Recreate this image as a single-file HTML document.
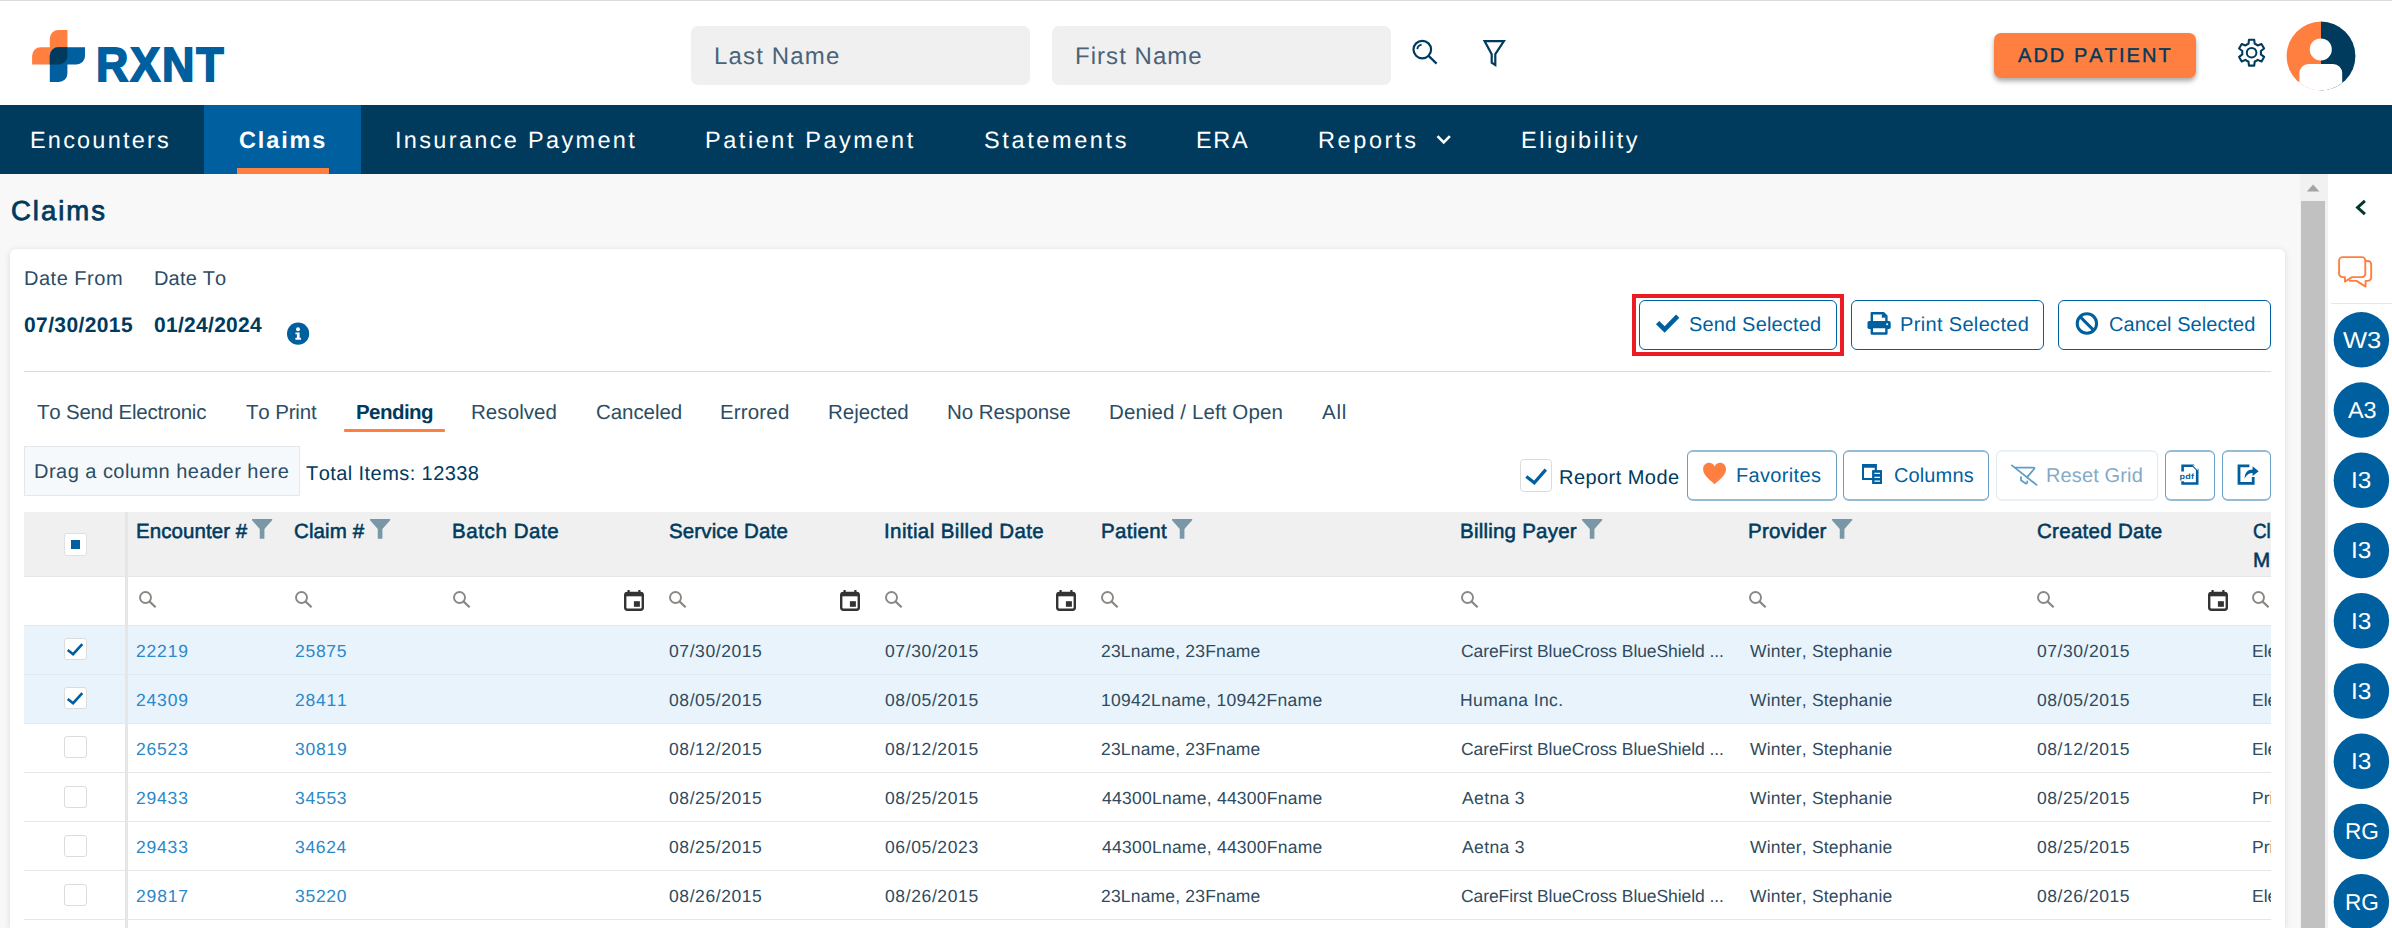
<!DOCTYPE html>
<html lang="en"><head><meta charset="utf-8"><title>Claims - RXNT</title>
<style>
html,body{margin:0;padding:0}
html{width:2392px;height:928px;overflow:hidden}
body{width:2392px;height:928px;overflow:hidden;position:relative;background:#f8f8f8;font-family:"Liberation Sans",Arial,sans-serif;font-kerning:none;text-rendering:geometricPrecision;-webkit-font-smoothing:antialiased}
body *{position:absolute;box-sizing:border-box;white-space:nowrap;margin:0;padding:0}
header,nav,main,aside,div[role]{left:0;top:0;display:block}
b{font-weight:bold}
h1{font-weight:normal}
a{text-decoration:none}
svg{overflow:visible;display:block}
svg *{position:static}
.btn{border:1.5px solid #005f9e;border-radius:6px;background:#fff}
</style></head><body>
<header>
<div style="left:0px;top:0px;width:2392px;height:105px;background:#fff;"></div>
<div style="left:0px;top:0px;width:2392px;height:1px;background:#dcdcdc;"></div>
<svg style="left:30px;top:28px;" width="60" height="56" viewBox="30 28 60 56"><path d="M58.3,30.1H67.4V55.9A8.5,8.5 0 0 1 58.9,64.4H32.1V55.7A8.5,8.5 0 0 1 40.6,47.2H49.8V38.6A8.5,8.5 0 0 1 58.3,30.1Z" fill="#ff7f41"/><path d="M58.3,47.2H85V55.9A8.5,8.5 0 0 1 76.5,64.4H67.4V73.5A8.5,8.5 0 0 1 58.9,82H49.8V55.7A8.5,8.5 0 0 1 58.3,47.2Z" fill="#005f9e"/><path d="M58.3,47.2H67.4V55.9A8.5,8.5 0 0 1 58.9,64.4H49.8V55.7A8.5,8.5 0 0 1 58.3,47.2Z" fill="#003a5d"/></svg>
<span style="left:96px;top:42.1px;font-size:48px;line-height:48px;color:#005f9e;font-weight:bold;transform:scaleX(0.9335);transform-origin:0 0;letter-spacing:2px;-webkit-text-stroke:1.8px #005f9e;">RXNT</span>
<div style="left:691px;top:25.6px;width:339px;height:59.2px;background:#f0f0f0;border-radius:7px;"></div>
<span style="left:714px;top:45px;font-size:24px;line-height:24px;color:#4a6378;letter-spacing:1.16px;">Last Name</span>
<div style="left:1051.6px;top:25.6px;width:339px;height:59.2px;background:#f0f0f0;border-radius:7px;"></div>
<span style="left:1075px;top:45px;font-size:24px;line-height:24px;color:#4a6378;letter-spacing:1.04px;">First Name</span>
<svg style="left:1408px;top:36px;" width="34" height="32" viewBox="1408 36 34 32"><circle cx="1422.3" cy="49.6" r="8.8" fill="none" stroke="#003a5d" stroke-width="2.2"/><path d="M1428.6,55.9L1436.6,63.6" stroke="#003a5d" stroke-width="2.2" fill="none" stroke-linecap="butt"/><path d="M1417.3,49.2A5.2,5.2 0 0 1 1421.6,44.6" stroke="#003a5d" stroke-width="1.8" fill="none"/></svg>
<svg style="left:1480px;top:36px;" width="30" height="34" viewBox="1480 36 30 34"><path d="M1484.6,41.1H1503.9L1495.3,54.2V65L1491.7,62.6V54.2Z" fill="none" stroke="#003a5d" stroke-width="2.2" stroke-linejoin="miter"/></svg>
<div style="left:1994px;top:33px;width:202px;height:45.3px;background:#ff7f41;border-radius:7px;box-shadow:0 3px 5px rgba(0,0,0,.35);"></div>
<span style="left:2018px;top:46.2px;font-size:20px;line-height:20px;color:#003a5d;letter-spacing:2.04px;-webkit-text-stroke:0.4px #003a5d;">ADD PATIENT</span>
<svg style="left:2236px;top:37px;" width="32" height="32" viewBox="2236 37 32 32"><path d="M2248.47,43.84L2248.98,39.76L2254.22,39.76L2254.73,43.84A9.4,9.4 0 0 1 2257.71,45.55L2261.49,43.96L2264.11,48.50L2260.84,50.98A9.4,9.4 0 0 1 2260.84,54.42L2264.11,56.90L2261.49,61.44L2257.71,59.85A9.4,9.4 0 0 1 2254.73,61.56L2254.22,65.64L2248.98,65.64L2248.47,61.56A9.4,9.4 0 0 1 2245.49,59.85L2241.71,61.44L2239.09,56.90L2242.36,54.42A9.4,9.4 0 0 1 2242.36,50.98L2239.09,48.50L2241.71,43.96L2245.49,45.55A9.4,9.4 0 0 1 2248.47,43.84Z" fill="none" stroke="#003a5d" stroke-width="2.1" stroke-linejoin="round"/><circle cx="2251.6" cy="52.7" r="4.8" fill="none" stroke="#003a5d" stroke-width="2"/></svg>
<svg style="left:2286px;top:21px;" width="70" height="70" viewBox="2286 21 70 70"><path d="M2321,21.6A34.4,34.4 0 0 0 2321,90.4Z" fill="#ff7f41"/><path d="M2321,21.6A34.4,34.4 0 0 1 2321,90.4Z" fill="#003a5d"/><circle cx="2320.8" cy="49.4" r="11" fill="#fff"/><path d="M2299.4,82.8V73.1A9,9 0 0 1 2308.4,64.1H2333.2A9,9 0 0 1 2342.2,73.1V83.1A34.4,34.4 0 0 1 2299.4,82.8Z" fill="#fff"/></svg>
</header>
<nav>
<div style="left:0px;top:105px;width:2392px;height:69px;background:#003a5d;"></div>
<div style="left:204px;top:105px;width:157px;height:69px;background:#005f9e;"></div>
<div style="left:237px;top:167.8px;width:92px;height:6.2px;background:#ff7f41;"></div>
<a style="left:30px;top:127.6px;font-size:23.5px;line-height:24px;color:#fff;letter-spacing:2.2px;">Encounters</a>
<a style="left:239px;top:127.6px;font-size:23.5px;line-height:24px;color:#fff;font-weight:bold;letter-spacing:1.86px;">Claims</a>
<a style="left:395px;top:127.6px;font-size:23.5px;line-height:24px;color:#fff;letter-spacing:2.33px;">Insurance Payment</a>
<a style="left:705px;top:127.6px;font-size:23.5px;line-height:24px;color:#fff;letter-spacing:2.56px;">Patient Payment</a>
<a style="left:984px;top:127.6px;font-size:23.5px;line-height:24px;color:#fff;letter-spacing:2.62px;">Statements</a>
<a style="left:1196px;top:127.6px;font-size:23.5px;line-height:24px;color:#fff;letter-spacing:1.66px;">ERA</a>
<a style="left:1318px;top:127.6px;font-size:23.5px;line-height:24px;color:#fff;letter-spacing:2.61px;">Reports</a>
<a style="left:1521px;top:127.6px;font-size:23.5px;line-height:24px;color:#fff;letter-spacing:2.52px;">Eligibility</a>
<svg style="left:1434px;top:130px;" width="20" height="20" viewBox="1434 130 20 20"><path d="M1437.5,136.2L1443.7,142.4L1449.9,136.2" fill="none" stroke="#fff" stroke-width="2.6"/></svg>
</nav>
<main>
<h1 style="left:11px;top:197.1px;font-size:27.5px;line-height:28px;color:#003a5d;letter-spacing:1.99px;-webkit-text-stroke:0.8px #003a5d;">Claims</h1>
<section style="left:10px;top:249px;width:2275px;height:679px;background:#fff;border-radius:6px 6px 0 0;box-shadow:0 1px 6px rgba(0,0,0,.13);"></section>
<span style="left:24px;top:268.8px;font-size:20px;line-height:20px;color:#2c4d63;letter-spacing:0.51px;">Date From</span>
<span style="left:154px;top:268.8px;font-size:20px;line-height:20px;color:#2c4d63;letter-spacing:0.17px;">Date To</span>
<span style="left:24px;top:314.7px;font-size:21px;line-height:21px;color:#003a5d;font-weight:bold;letter-spacing:0.39px;">07/30/2015</span>
<span style="left:154px;top:314.7px;font-size:21px;line-height:21px;color:#003a5d;font-weight:bold;letter-spacing:0.29px;">01/24/2024</span>
<svg style="left:286px;top:322px;" width="24" height="24" viewBox="286 322 24 24"><circle cx="298.1" cy="333.7" r="11.1" fill="#005f9e"/><circle cx="298" cy="329.2" r="2" fill="#fff"/><path d="M295.4,332.5H299.6V337.8H301V339.8H295.4V337.8H296.9V334.2H295.4Z" fill="#fff"/></svg>
<div style="left:1632.2px;top:293.7px;width:211.5px;height:61.9px;border:4px solid #ed1c24;"></div>
<div class="btn" style="left:1639.2px;top:300px;width:197.7px;height:49.9px;"></div>
<svg style="left:1655px;top:314px;" width="25" height="20" viewBox="1655 314 25 20"><path d="M1657.6,322.6L1664.6,329.5L1677.7,316.1" fill="none" stroke="#005f9e" stroke-width="4.6"/></svg>
<span style="left:1689px;top:315px;font-size:20px;line-height:20px;color:#005f9e;letter-spacing:0.17px;">Send Selected</span>
<div class="btn" style="left:1851px;top:300px;width:192.8px;height:49.9px;"></div>
<span style="left:1900px;top:315.2px;font-size:20px;line-height:20px;color:#005f9e;letter-spacing:0.34px;">Print Selected</span>
<div class="btn" style="left:2057.9px;top:300px;width:212.9px;height:49.9px;"></div>
<span style="left:2109px;top:315.2px;font-size:20px;line-height:20px;color:#005f9e;letter-spacing:0.05px;">Cancel Selected</span>
<svg style="left:1866px;top:311px;" width="26" height="25" viewBox="1866 311 26 25"><path d="M1871.8,322V313.2H1883.4L1886.4,316.2V322" fill="#fff" stroke="#005f9e" stroke-width="2.4" stroke-linejoin="round"/><path d="M1881.8,314.3H1885.2V317.7H1881.8Z" fill="#005f9e"/><rect x="1867.5" y="321.1" width="23.2" height="7.8" rx="1.6" fill="#005f9e"/><rect x="1871.8" y="327" width="14.6" height="6.5" fill="#fff" stroke="#005f9e" stroke-width="2.4" stroke-linejoin="round"/><circle cx="1887.1" cy="324.3" r="1" fill="#fff"/></svg>
<svg style="left:2074px;top:311px;" width="26" height="25" viewBox="2074 311 26 25"><circle cx="2086.9" cy="323.5" r="9.7" fill="none" stroke="#005f9e" stroke-width="3"/><path d="M2080,316.6L2093.8,330.4" stroke="#005f9e" stroke-width="3"/></svg>
<div style="left:24.4px;top:371px;width:2246.4px;height:1.2px;background:#dcdcdc;"></div>
<a style="left:37px;top:403px;font-size:20.5px;line-height:20px;color:#2c4d63;letter-spacing:-0.22px;">To Send Electronic</a>
<a style="left:246px;top:403px;font-size:20.5px;line-height:20px;color:#2c4d63;letter-spacing:-0.15px;">To Print</a>
<a style="left:356px;top:403px;font-size:20.5px;line-height:20px;color:#003a5d;font-weight:bold;letter-spacing:-0.56px;">Pending</a>
<a style="left:471px;top:403px;font-size:20.5px;line-height:20px;color:#2c4d63;letter-spacing:0.07px;">Resolved</a>
<a style="left:596px;top:403px;font-size:20.5px;line-height:20px;color:#2c4d63;letter-spacing:-0.06px;">Canceled</a>
<a style="left:720px;top:403px;font-size:20.5px;line-height:20px;color:#2c4d63;letter-spacing:0.16px;">Errored</a>
<a style="left:828px;top:403px;font-size:20.5px;line-height:20px;color:#2c4d63;letter-spacing:-0.03px;">Rejected</a>
<a style="left:947px;top:403px;font-size:20.5px;line-height:20px;color:#2c4d63;letter-spacing:-0.05px;">No Response</a>
<a style="left:1109px;top:403px;font-size:20.5px;line-height:20px;color:#2c4d63;letter-spacing:0.1px;">Denied / Left Open</a>
<a style="left:1322px;top:403px;font-size:20.5px;line-height:20px;color:#2c4d63;letter-spacing:0.74px;">All</a>
<div style="left:343.9px;top:429.4px;width:100.9px;height:2.3px;background:#ff7f41;border-radius:1px;"></div>
<div style="left:24.3px;top:446.1px;width:275.4px;height:49.5px;background:#f5f9fc;border:1px solid #e3e8ec;"></div>
<span style="left:34px;top:462px;font-size:20px;line-height:20px;color:#2c4d63;letter-spacing:0.47px;">Drag a column header here</span>
<span style="left:306px;top:464px;font-size:20px;line-height:20px;color:#003a5d;letter-spacing:0.43px;">Total Items: 12338</span>
<div style="left:1519.5px;top:459px;width:32.5px;height:33px;background:#fff;border:1px solid #dcdcdc;border-radius:4px;"></div>
<svg style="left:1522px;top:462px;" width="28" height="28" viewBox="1522 462 28 28"><path d="M1526.3,476.6L1534.3,482.8L1545.8,469.6" fill="none" stroke="#005f9e" stroke-width="3.2"/></svg>
<span style="left:1559px;top:468px;font-size:20px;line-height:20px;color:#003a5d;letter-spacing:0.45px;">Report Mode</span>
<div class="btn" style="left:1687px;top:450px;width:149.6px;height:50.6px;border-style:solid;border-width:2px 1px;border-color:#94bcd5 #6a9fc4;"></div>
<svg style="left:1702px;top:462px;" width="26" height="23" viewBox="1702 462 26 23"><path d="M1714.6,484.3C1708,478.5 1703.1,474.6 1703.1,469.1C1703.1,465.4 1705.8,462.7 1709.2,462.7C1711.4,462.7 1713.4,464 1714.6,466.4C1715.8,464 1717.8,462.7 1720,462.7C1723.4,462.7 1726,465.4 1726,469.1C1726,474.6 1721.2,478.5 1714.6,484.3Z" fill="#ff7f41"/></svg>
<span style="left:1736px;top:466px;font-size:20px;line-height:20px;color:#005f9e;letter-spacing:0.33px;">Favorites</span>
<div class="btn" style="left:1843.1px;top:450px;width:145.9px;height:50.6px;border-style:solid;border-width:2px 1px;border-color:#94bcd5 #6a9fc4;"></div>
<svg style="left:1861px;top:463px;" width="22" height="22" viewBox="1861 463 22 22"><path d="M1862,464.05H1876.9V479.9H1862ZM1864,467.7V478.1H1874.7V467.7Z" fill="#005f9e" fill-rule="evenodd"/><rect x="1872.1" y="470.1" width="9.9" height="13.9" fill="#005f9e"/><path d="M1874.4,473.4H1880M1874.4,477.3H1880M1874.4,481.2H1880" stroke="#fff" stroke-width="1.3"/></svg>
<span style="left:1894px;top:466px;font-size:20px;line-height:20px;color:#005f9e;letter-spacing:0.12px;">Columns</span>
<div class="btn" style="left:1996.3px;top:450px;width:161.7px;height:50.6px;border-style:solid;border-width:2px 1px;border-color:#eaf1f6 #dde8f0;"></div>
<svg style="left:2010px;top:463px;" width="30" height="24" viewBox="2010 463 30 24"><g stroke="#5f9dc4" stroke-width="1.8" fill="none" stroke-linecap="round" stroke-linejoin="round"><path d="M2011.9,465.4L2036.6,484.9"/><path d="M2015.4,467.6H2033.3Q2035.1,467.6 2034.1,469L2026.9,477.3"/><path d="M2021,477.2V480.3L2025.7,483.6Q2027.5,483.5 2027.2,481.5"/></g></svg>
<span style="left:2046px;top:466px;font-size:20px;line-height:20px;color:#84aac8;letter-spacing:0.13px;">Reset Grid</span>
<div class="btn" style="left:2165px;top:450px;width:49.6px;height:50.6px;border-style:solid;border-width:2px 1px;border-color:#94bcd5 #6a9fc4;"></div>
<div class="btn" style="left:2221.9px;top:450px;width:48.9px;height:50.6px;border-style:solid;border-width:2px 1px;border-color:#94bcd5 #6a9fc4;"></div>
<svg style="left:2179px;top:463px;" width="22" height="24" viewBox="2179 463 22 24"><path d="M2182.6,471.5V465.7H2193.3L2197.2,469.6V483.5H2182.6V481.2" fill="none" stroke="#005f9e" stroke-width="2.6"/><path d="M2192.6,465.2L2197.8,470.4V465.2Z" fill="#fff"/></svg>
<span style="left:2179.6px;top:471.2px;font-size:9px;line-height:11px;font-weight:bold;color:#005f9e;letter-spacing:.2px;transform:scaleY(.86)">pdf</span>
<svg style="left:2236px;top:463px;" width="24" height="24" viewBox="2236 463 24 24"><path d="M2253.2,477V483.4H2239V465.8H2249.4" fill="none" stroke="#005f9e" stroke-width="2.8"/><path d="M2244.6,478.4C2244.8,472.6 2247.8,469.5 2252.6,469.5V466.3L2258.7,471.2L2252.6,476.1V473C2249.3,473 2246.8,474.6 2244.6,478.4Z" fill="#005f9e"/></svg>
<div role="table">
<div role="rowgroup">
<div style="left:24.4px;top:512px;width:2246.4px;height:65px;background:#f0f0f0;"></div>
<div style="left:24.4px;top:576px;width:2246.4px;height:1px;background:#e6e6e6;"></div>
<b style="left:136px;top:521.8px;font-size:20.5px;line-height:20px;color:#003a5d;letter-spacing:0.07px;-webkit-text-stroke:0.55px #003a5d;font-weight:normal;">Encounter #</b>
<svg style="left:252.3px;top:519.3px;" width="20.2" height="19.8" viewBox="252.3 519.3 20.2 19.8"><path d="M252.3,519.3H272.5V520.5L264.723,529.1999999999999V539.0999999999999H260.077V529.1999999999999L252.3,520.5Z" fill="#7a97a8"/></svg>
<b style="left:294px;top:521.8px;font-size:20.5px;line-height:20px;color:#003a5d;letter-spacing:0.12px;-webkit-text-stroke:0.55px #003a5d;font-weight:normal;">Claim #</b>
<svg style="left:369.8px;top:519.3px;" width="20.2" height="19.8" viewBox="369.8 519.3 20.2 19.8"><path d="M369.8,519.3H390.0V520.5L382.223,529.1999999999999V539.0999999999999H377.577V529.1999999999999L369.8,520.5Z" fill="#7a97a8"/></svg>
<b style="left:452px;top:521.8px;font-size:20.5px;line-height:20px;color:#003a5d;letter-spacing:0.59px;-webkit-text-stroke:0.55px #003a5d;font-weight:normal;">Batch Date</b>
<b style="left:669px;top:521.8px;font-size:20.5px;line-height:20px;color:#003a5d;letter-spacing:0.13px;-webkit-text-stroke:0.55px #003a5d;font-weight:normal;">Service Date</b>
<b style="left:884px;top:521.8px;font-size:20.5px;line-height:20px;color:#003a5d;letter-spacing:0.39px;-webkit-text-stroke:0.55px #003a5d;font-weight:normal;">Initial Billed Date</b>
<b style="left:1101px;top:521.8px;font-size:20.5px;line-height:20px;color:#003a5d;letter-spacing:0.31px;-webkit-text-stroke:0.55px #003a5d;font-weight:normal;">Patient</b>
<svg style="left:1172.2px;top:519.3px;" width="20.2" height="19.8" viewBox="1172.2 519.3 20.2 19.8"><path d="M1172.2,519.3H1192.4V520.5L1184.623,529.1999999999999V539.0999999999999H1179.977V529.1999999999999L1172.2,520.5Z" fill="#7a97a8"/></svg>
<b style="left:1460px;top:521.8px;font-size:20.5px;line-height:20px;color:#003a5d;letter-spacing:0.22px;-webkit-text-stroke:0.55px #003a5d;font-weight:normal;">Billing Payer</b>
<svg style="left:1581.5px;top:519.3px;" width="20.2" height="19.8" viewBox="1581.5 519.3 20.2 19.8"><path d="M1581.5,519.3H1601.7V520.5L1593.923,529.1999999999999V539.0999999999999H1589.277V529.1999999999999L1581.5,520.5Z" fill="#7a97a8"/></svg>
<b style="left:1748px;top:521.8px;font-size:20.5px;line-height:20px;color:#003a5d;letter-spacing:0.3px;-webkit-text-stroke:0.55px #003a5d;font-weight:normal;">Provider</b>
<svg style="left:1831.8px;top:519.3px;" width="20.2" height="19.8" viewBox="1831.8 519.3 20.2 19.8"><path d="M1831.8,519.3H1852.0V520.5L1844.223,529.1999999999999V539.0999999999999H1839.577V529.1999999999999L1831.8,520.5Z" fill="#7a97a8"/></svg>
<b style="left:2037px;top:521.8px;font-size:20.5px;line-height:20px;color:#003a5d;letter-spacing:0.29px;-webkit-text-stroke:0.55px #003a5d;font-weight:normal;">Created Date</b>
<div style="left:2242px;top:512px;width:28.8px;height:64px;overflow:hidden">
<b style="left:11px;top:9.8px;font-size:20.5px;line-height:20px;color:#003a5d;transform:scaleX(0.9191);transform-origin:0 0;-webkit-text-stroke:0.55px #003a5d;font-weight:normal;">Cl</b>
<b style="left:11px;top:39px;font-size:20.5px;line-height:20px;color:#003a5d;transform:scaleX(1.0065);transform-origin:0 0;-webkit-text-stroke:0.55px #003a5d;font-weight:normal;">M</b>
</div>
<div style="left:63.8px;top:533.3px;width:22.8px;height:22.8px;background:#fff;border:1px solid #e0e0e0;border-radius:3px;"></div>
<div style="left:70.8px;top:540.1px;width:9.4px;height:9.4px;background:#005f9e;"></div>
</div>
<div role="rowgroup">
<div style="left:24.4px;top:577px;width:2246.4px;height:48.5px;background:#fff;"></div>
<div style="left:24.4px;top:624.5px;width:2246.4px;height:1px;background:#e6e6e6;"></div>
<svg style="left:139.1px;top:590.8px;" width="18" height="17" viewBox="139.1 590.8 18 17"><circle cx="145.6" cy="597.3" r="5.5" fill="none" stroke="#8a8784" stroke-width="1.9"/><path d="M149.5,601.1999999999999L155.7,607.0" stroke="#8a8784" stroke-width="2.2"/></svg>
<svg style="left:295.1px;top:590.8px;" width="18" height="17" viewBox="295.1 590.8 18 17"><circle cx="301.59999999999997" cy="597.3" r="5.5" fill="none" stroke="#8a8784" stroke-width="1.9"/><path d="M305.49999999999994,601.1999999999999L311.7,607.0" stroke="#8a8784" stroke-width="2.2"/></svg>
<svg style="left:453.1px;top:590.8px;" width="18" height="17" viewBox="453.1 590.8 18 17"><circle cx="459.59999999999997" cy="597.3" r="5.5" fill="none" stroke="#8a8784" stroke-width="1.9"/><path d="M463.49999999999994,601.1999999999999L469.7,607.0" stroke="#8a8784" stroke-width="2.2"/></svg>
<svg style="left:668.8px;top:590.8px;" width="18" height="17" viewBox="668.8 590.8 18 17"><circle cx="675.3000000000001" cy="597.3" r="5.5" fill="none" stroke="#8a8784" stroke-width="1.9"/><path d="M679.2,601.1999999999999L685.4000000000001,607.0" stroke="#8a8784" stroke-width="2.2"/></svg>
<svg style="left:884.9px;top:590.8px;" width="18" height="17" viewBox="884.9 590.8 18 17"><circle cx="891.4000000000001" cy="597.3" r="5.5" fill="none" stroke="#8a8784" stroke-width="1.9"/><path d="M895.3000000000001,601.1999999999999L901.5000000000001,607.0" stroke="#8a8784" stroke-width="2.2"/></svg>
<svg style="left:1101.1px;top:590.8px;" width="18" height="17" viewBox="1101.1 590.8 18 17"><circle cx="1107.6000000000001" cy="597.3" r="5.5" fill="none" stroke="#8a8784" stroke-width="1.9"/><path d="M1111.5000000000002,601.1999999999999L1117.7,607.0" stroke="#8a8784" stroke-width="2.2"/></svg>
<svg style="left:1461.1px;top:590.8px;" width="18" height="17" viewBox="1461.1 590.8 18 17"><circle cx="1467.6000000000001" cy="597.3" r="5.5" fill="none" stroke="#8a8784" stroke-width="1.9"/><path d="M1471.5000000000002,601.1999999999999L1477.7,607.0" stroke="#8a8784" stroke-width="2.2"/></svg>
<svg style="left:1749px;top:590.8px;" width="18" height="17" viewBox="1749 590.8 18 17"><circle cx="1755.5" cy="597.3" r="5.5" fill="none" stroke="#8a8784" stroke-width="1.9"/><path d="M1759.4,601.1999999999999L1765.6,607.0" stroke="#8a8784" stroke-width="2.2"/></svg>
<svg style="left:2037.1px;top:590.8px;" width="18" height="17" viewBox="2037.1 590.8 18 17"><circle cx="2043.6000000000001" cy="597.3" r="5.5" fill="none" stroke="#8a8784" stroke-width="1.9"/><path d="M2047.5000000000002,601.1999999999999L2053.7000000000003,607.0" stroke="#8a8784" stroke-width="2.2"/></svg>
<svg style="left:624px;top:589.8px;" width="20.2" height="21" viewBox="624 589.8 20.2 21"><path d="M628.6,589.8V592.8M639.4,589.8V592.8" stroke="#333" stroke-width="2.2"/><rect x="625.2" y="592.6999999999999" width="17.6" height="16.9" rx="2.2" fill="none" stroke="#333" stroke-width="2.4"/><rect x="625.2" y="592.6999999999999" width="17.6" height="3.4" fill="#333"/><rect x="633.9" y="601.0" width="6" height="5.6" fill="#333"/></svg>
<svg style="left:840.2px;top:589.8px;" width="20.2" height="21" viewBox="840.2 589.8 20.2 21"><path d="M844.8000000000001,589.8V592.8M855.6,589.8V592.8" stroke="#333" stroke-width="2.2"/><rect x="841.4000000000001" y="592.6999999999999" width="17.6" height="16.9" rx="2.2" fill="none" stroke="#333" stroke-width="2.4"/><rect x="841.4000000000001" y="592.6999999999999" width="17.6" height="3.4" fill="#333"/><rect x="850.1" y="601.0" width="6" height="5.6" fill="#333"/></svg>
<svg style="left:1056.2px;top:589.8px;" width="20.2" height="21" viewBox="1056.2 589.8 20.2 21"><path d="M1060.8,589.8V592.8M1071.6000000000001,589.8V592.8" stroke="#333" stroke-width="2.2"/><rect x="1057.4" y="592.6999999999999" width="17.6" height="16.9" rx="2.2" fill="none" stroke="#333" stroke-width="2.4"/><rect x="1057.4" y="592.6999999999999" width="17.6" height="3.4" fill="#333"/><rect x="1066.1000000000001" y="601.0" width="6" height="5.6" fill="#333"/></svg>
<svg style="left:2208.1px;top:589.8px;" width="20.2" height="21" viewBox="2208.1 589.8 20.2 21"><path d="M2212.7,589.8V592.8M2223.5,589.8V592.8" stroke="#333" stroke-width="2.2"/><rect x="2209.2999999999997" y="592.6999999999999" width="17.6" height="16.9" rx="2.2" fill="none" stroke="#333" stroke-width="2.4"/><rect x="2209.2999999999997" y="592.6999999999999" width="17.6" height="3.4" fill="#333"/><rect x="2218.0" y="601.0" width="6" height="5.6" fill="#333"/></svg>
<div style="left:2242px;top:577px;width:28.8px;height:49px;overflow:hidden">
<svg style="left:10.3px;top:13.8px;" width="18" height="17" viewBox="0 0 18 17"><circle cx="6.5" cy="6.5" r="5.5" fill="none" stroke="#8a8784" stroke-width="1.9"/><path d="M10.4,10.4L16.6,16.2" stroke="#8a8784" stroke-width="2.2"/></svg>
</div>
<div role="row">
<div style="left:24.4px;top:625.5px;width:2246.4px;height:49.1px;background:#e8f3fc;"></div>
<div style="left:24.4px;top:673.6px;width:2246.4px;height:1px;background:#dfe9f0;"></div>
<span style="left:136px;top:641.7px;font-size:17.5px;line-height:18px;color:#2b88c9;letter-spacing:0.82px;">22219</span>
<span style="left:295px;top:641.7px;font-size:17.5px;line-height:18px;color:#2b88c9;letter-spacing:0.72px;">25875</span>
<span style="left:669px;top:641.7px;font-size:17.5px;line-height:18px;color:#2f4b5e;letter-spacing:0.58px;">07/30/2015</span>
<span style="left:885px;top:641.7px;font-size:17.5px;line-height:18px;color:#2f4b5e;letter-spacing:0.62px;">07/30/2015</span>
<span style="left:1101px;top:641.7px;font-size:17.5px;line-height:18px;color:#2f4b5e;letter-spacing:0.18px;">23Lname, 23Fname</span>
<span style="left:1461px;top:641.7px;font-size:17.5px;line-height:18px;color:#2f4b5e;letter-spacing:-0.08px;">CareFirst BlueCross BlueShield ...</span>
<span style="left:1750px;top:641.7px;font-size:17.5px;line-height:18px;color:#2f4b5e;letter-spacing:0.2px;">Winter, Stephanie</span>
<span style="left:2037px;top:641.7px;font-size:17.5px;line-height:18px;color:#2f4b5e;letter-spacing:0.54px;">07/30/2015</span>
<div style="left:2242px;top:625.5px;width:28.8px;height:48px;overflow:hidden">
<span style="left:10px;top:16.2px;font-size:17.5px;line-height:18px;color:#2f4b5e;">Ele</span>
</div>
<div style="left:64px;top:638.2px;width:22.6px;height:22px;background:#fff;border:1px solid #dcdcdc;border-radius:3px;"></div>
<svg style="left:65px;top:639.2px;" width="21" height="20" viewBox="65 639.2 21 20"><path d="M67.7,650.1L73.1,654.4L82.3,644.3" fill="none" stroke="#005f9e" stroke-width="2.6"/></svg>
</div>
<div role="row">
<div style="left:24.4px;top:674.6px;width:2246.4px;height:49.1px;background:#e8f3fc;"></div>
<div style="left:24.4px;top:722.7px;width:2246.4px;height:1px;background:#dfe9f0;"></div>
<span style="left:136px;top:690.8px;font-size:17.5px;line-height:18px;color:#2b88c9;letter-spacing:0.82px;">24309</span>
<span style="left:295px;top:690.8px;font-size:17.5px;line-height:18px;color:#2b88c9;letter-spacing:0.75px;">28411</span>
<span style="left:669px;top:690.8px;font-size:17.5px;line-height:18px;color:#2f4b5e;letter-spacing:0.58px;">08/05/2015</span>
<span style="left:885px;top:690.8px;font-size:17.5px;line-height:18px;color:#2f4b5e;letter-spacing:0.62px;">08/05/2015</span>
<span style="left:1101px;top:690.8px;font-size:17.5px;line-height:18px;color:#2f4b5e;letter-spacing:0.29px;">10942Lname, 10942Fname</span>
<span style="left:1460px;top:690.8px;font-size:17.5px;line-height:18px;color:#2f4b5e;letter-spacing:0.39px;">Humana Inc.</span>
<span style="left:1750px;top:690.8px;font-size:17.5px;line-height:18px;color:#2f4b5e;letter-spacing:0.2px;">Winter, Stephanie</span>
<span style="left:2037px;top:690.8px;font-size:17.5px;line-height:18px;color:#2f4b5e;letter-spacing:0.54px;">08/05/2015</span>
<div style="left:2242px;top:674.6px;width:28.8px;height:48px;overflow:hidden">
<span style="left:10px;top:16.2px;font-size:17.5px;line-height:18px;color:#2f4b5e;">Ele</span>
</div>
<div style="left:64px;top:687.3px;width:22.6px;height:22px;background:#fff;border:1px solid #dcdcdc;border-radius:3px;"></div>
<svg style="left:65px;top:688.3px;" width="21" height="20" viewBox="65 688.3 21 20"><path d="M67.7,699.2L73.1,703.5L82.3,693.4" fill="none" stroke="#005f9e" stroke-width="2.6"/></svg>
</div>
<div role="row">
<div style="left:24.4px;top:723.7px;width:2246.4px;height:49.1px;background:#fff;"></div>
<div style="left:24.4px;top:771.8px;width:2246.4px;height:1px;background:#e6e6e6;"></div>
<span style="left:136px;top:739.9px;font-size:17.5px;line-height:18px;color:#2b88c9;letter-spacing:0.8px;">26523</span>
<span style="left:295px;top:739.9px;font-size:17.5px;line-height:18px;color:#2b88c9;letter-spacing:0.74px;">30819</span>
<span style="left:669px;top:739.9px;font-size:17.5px;line-height:18px;color:#2f4b5e;letter-spacing:0.58px;">08/12/2015</span>
<span style="left:885px;top:739.9px;font-size:17.5px;line-height:18px;color:#2f4b5e;letter-spacing:0.62px;">08/12/2015</span>
<span style="left:1101px;top:739.9px;font-size:17.5px;line-height:18px;color:#2f4b5e;letter-spacing:0.18px;">23Lname, 23Fname</span>
<span style="left:1461px;top:739.9px;font-size:17.5px;line-height:18px;color:#2f4b5e;letter-spacing:-0.08px;">CareFirst BlueCross BlueShield ...</span>
<span style="left:1750px;top:739.9px;font-size:17.5px;line-height:18px;color:#2f4b5e;letter-spacing:0.2px;">Winter, Stephanie</span>
<span style="left:2037px;top:739.9px;font-size:17.5px;line-height:18px;color:#2f4b5e;letter-spacing:0.54px;">08/12/2015</span>
<div style="left:2242px;top:723.7px;width:28.8px;height:48px;overflow:hidden">
<span style="left:10px;top:16.2px;font-size:17.5px;line-height:18px;color:#2f4b5e;">Ele</span>
</div>
<div style="left:64px;top:736.4px;width:22.6px;height:22px;background:#fff;border:1px solid #dcdcdc;border-radius:3px;"></div>
</div>
<div role="row">
<div style="left:24.4px;top:772.8px;width:2246.4px;height:49.1px;background:#fff;"></div>
<div style="left:24.4px;top:820.9px;width:2246.4px;height:1px;background:#e6e6e6;"></div>
<span style="left:136px;top:789px;font-size:17.5px;line-height:18px;color:#2b88c9;letter-spacing:0.8px;">29433</span>
<span style="left:295px;top:789px;font-size:17.5px;line-height:18px;color:#2b88c9;letter-spacing:0.73px;">34553</span>
<span style="left:669px;top:789px;font-size:17.5px;line-height:18px;color:#2f4b5e;letter-spacing:0.58px;">08/25/2015</span>
<span style="left:885px;top:789px;font-size:17.5px;line-height:18px;color:#2f4b5e;letter-spacing:0.62px;">08/25/2015</span>
<span style="left:1102px;top:789px;font-size:17.5px;line-height:18px;color:#2f4b5e;letter-spacing:0.25px;">44300Lname, 44300Fname</span>
<span style="left:1462px;top:789px;font-size:17.5px;line-height:18px;color:#2f4b5e;letter-spacing:0.37px;">Aetna 3</span>
<span style="left:1750px;top:789px;font-size:17.5px;line-height:18px;color:#2f4b5e;letter-spacing:0.2px;">Winter, Stephanie</span>
<span style="left:2037px;top:789px;font-size:17.5px;line-height:18px;color:#2f4b5e;letter-spacing:0.54px;">08/25/2015</span>
<div style="left:2242px;top:772.8px;width:28.8px;height:48px;overflow:hidden">
<span style="left:10px;top:16.2px;font-size:17.5px;line-height:18px;color:#2f4b5e;">Pri</span>
</div>
<div style="left:64px;top:785.5px;width:22.6px;height:22px;background:#fff;border:1px solid #dcdcdc;border-radius:3px;"></div>
</div>
<div role="row">
<div style="left:24.4px;top:821.9px;width:2246.4px;height:49.1px;background:#fff;"></div>
<div style="left:24.4px;top:870px;width:2246.4px;height:1px;background:#e6e6e6;"></div>
<span style="left:136px;top:838.1px;font-size:17.5px;line-height:18px;color:#2b88c9;letter-spacing:0.8px;">29433</span>
<span style="left:295px;top:838.1px;font-size:17.5px;line-height:18px;color:#2b88c9;letter-spacing:0.66px;">34624</span>
<span style="left:669px;top:838.1px;font-size:17.5px;line-height:18px;color:#2f4b5e;letter-spacing:0.58px;">08/25/2015</span>
<span style="left:885px;top:838.1px;font-size:17.5px;line-height:18px;color:#2f4b5e;letter-spacing:0.62px;">06/05/2023</span>
<span style="left:1102px;top:838.1px;font-size:17.5px;line-height:18px;color:#2f4b5e;letter-spacing:0.25px;">44300Lname, 44300Fname</span>
<span style="left:1462px;top:838.1px;font-size:17.5px;line-height:18px;color:#2f4b5e;letter-spacing:0.37px;">Aetna 3</span>
<span style="left:1750px;top:838.1px;font-size:17.5px;line-height:18px;color:#2f4b5e;letter-spacing:0.2px;">Winter, Stephanie</span>
<span style="left:2037px;top:838.1px;font-size:17.5px;line-height:18px;color:#2f4b5e;letter-spacing:0.54px;">08/25/2015</span>
<div style="left:2242px;top:821.9px;width:28.8px;height:48px;overflow:hidden">
<span style="left:10px;top:16.2px;font-size:17.5px;line-height:18px;color:#2f4b5e;">Pri</span>
</div>
<div style="left:64px;top:834.6px;width:22.6px;height:22px;background:#fff;border:1px solid #dcdcdc;border-radius:3px;"></div>
</div>
<div role="row">
<div style="left:24.4px;top:871px;width:2246.4px;height:49.1px;background:#fff;"></div>
<div style="left:24.4px;top:919.1px;width:2246.4px;height:1px;background:#e6e6e6;"></div>
<span style="left:136px;top:887.2px;font-size:17.5px;line-height:18px;color:#2b88c9;letter-spacing:0.83px;">29817</span>
<span style="left:295px;top:887.2px;font-size:17.5px;line-height:18px;color:#2b88c9;letter-spacing:0.71px;">35220</span>
<span style="left:669px;top:887.2px;font-size:17.5px;line-height:18px;color:#2f4b5e;letter-spacing:0.58px;">08/26/2015</span>
<span style="left:885px;top:887.2px;font-size:17.5px;line-height:18px;color:#2f4b5e;letter-spacing:0.62px;">08/26/2015</span>
<span style="left:1101px;top:887.2px;font-size:17.5px;line-height:18px;color:#2f4b5e;letter-spacing:0.18px;">23Lname, 23Fname</span>
<span style="left:1461px;top:887.2px;font-size:17.5px;line-height:18px;color:#2f4b5e;letter-spacing:-0.08px;">CareFirst BlueCross BlueShield ...</span>
<span style="left:1750px;top:887.2px;font-size:17.5px;line-height:18px;color:#2f4b5e;letter-spacing:0.2px;">Winter, Stephanie</span>
<span style="left:2037px;top:887.2px;font-size:17.5px;line-height:18px;color:#2f4b5e;letter-spacing:0.54px;">08/26/2015</span>
<div style="left:2242px;top:871px;width:28.8px;height:48px;overflow:hidden">
<span style="left:10px;top:16.2px;font-size:17.5px;line-height:18px;color:#2f4b5e;">Ele</span>
</div>
<div style="left:64px;top:883.7px;width:22.6px;height:22px;background:#fff;border:1px solid #dcdcdc;border-radius:3px;"></div>
</div>
</div>
<div style="left:125.2px;top:512px;width:2.4px;height:416px;background:#e6e6e6;"></div>
</div>
</main>
<div style="left:2300px;top:174px;width:28px;height:754px;background:#f1f1f1;"></div>
<div style="left:2301px;top:201.2px;width:24px;height:726.8px;background:#c1c1c1;"></div>
<svg style="left:2306px;top:184px;" width="14" height="8" viewBox="2306 184 14 8"><path d="M2306.9,191.4L2313.1,184.6L2319.4,191.4Z" fill="#a3a3a3"/></svg>
<aside>
<div style="left:2328px;top:174px;width:64px;height:754px;background:#fff;"></div>
<svg style="left:2354px;top:198px;" width="14" height="19" viewBox="2354 198 14 19"><path d="M2364.9,200.8L2357.6,207.5L2364.9,214.2" fill="none" stroke="#00382e" stroke-width="3"/></svg>
<svg style="left:2337px;top:254px;" width="38" height="36" viewBox="2337 254 38 36"><path d="M2342.5,257.1H2361.9A3.4,3.4 0 0 1 2365.3,260.5V273.7A3.4,3.4 0 0 1 2361.9,277.1H2352.2L2344.9,281.6V277.1H2342.5A3.4,3.4 0 0 1 2339.1,273.7V260.5A3.4,3.4 0 0 1 2342.5,257.1Z" fill="none" stroke="#ff7f41" stroke-width="1.9" stroke-linejoin="round"/><path d="M2365.3,261H2367.8A3.4,3.4 0 0 1 2371.2,264.4V277.5A3.4,3.4 0 0 1 2367.8,280.9H2365.6V286.6L2356.5,280.9H2349" fill="none" stroke="#ff7f41" stroke-width="1.9" stroke-linejoin="round"/></svg>
<div style="left:2331px;top:302.8px;width:61px;height:1.2px;background:#e6e6e6;"></div>
<svg style="left:2330px;top:300px;" width="62" height="628" viewBox="2330 300 62 628"><circle cx="2361.4" cy="339.8" r="27.75" fill="#005f9e"/><circle cx="2361.4" cy="410.05" r="27.75" fill="#005f9e"/><circle cx="2361.4" cy="480.3" r="27.75" fill="#005f9e"/><circle cx="2361.4" cy="550.55" r="27.75" fill="#005f9e"/><circle cx="2361.4" cy="620.8" r="27.75" fill="#005f9e"/><circle cx="2361.4" cy="691.05" r="27.75" fill="#005f9e"/><circle cx="2361.4" cy="761.3" r="27.75" fill="#005f9e"/><circle cx="2361.4" cy="831.55" r="27.75" fill="#005f9e"/><circle cx="2361.4" cy="901.8" r="27.75" fill="#005f9e"/></svg>
<span style="left:2343px;top:328.5px;font-size:23px;line-height:23px;color:#fff;transform:scaleX(1.1108);transform-origin:0 0;">W3</span>
<span style="left:2348px;top:398.75px;font-size:23px;line-height:23px;color:#fff;transform:scaleX(1.0176);transform-origin:0 0;">A3</span>
<span style="left:2351px;top:469px;font-size:23px;line-height:23px;color:#fff;transform:scaleX(1.0571);transform-origin:0 0;">I3</span>
<span style="left:2351px;top:539.25px;font-size:23px;line-height:23px;color:#fff;transform:scaleX(1.0571);transform-origin:0 0;">I3</span>
<span style="left:2351px;top:609.5px;font-size:23px;line-height:23px;color:#fff;transform:scaleX(1.0571);transform-origin:0 0;">I3</span>
<span style="left:2351px;top:679.75px;font-size:23px;line-height:23px;color:#fff;transform:scaleX(1.0571);transform-origin:0 0;">I3</span>
<span style="left:2351px;top:750px;font-size:23px;line-height:23px;color:#fff;transform:scaleX(1.0571);transform-origin:0 0;">I3</span>
<span style="left:2345px;top:820.25px;font-size:23px;line-height:23px;color:#fff;transform:scaleX(0.9844);transform-origin:0 0;">RG</span>
<span style="left:2345px;top:890.5px;font-size:23px;line-height:23px;color:#fff;transform:scaleX(0.9844);transform-origin:0 0;">RG</span>
</aside>
</body></html>
